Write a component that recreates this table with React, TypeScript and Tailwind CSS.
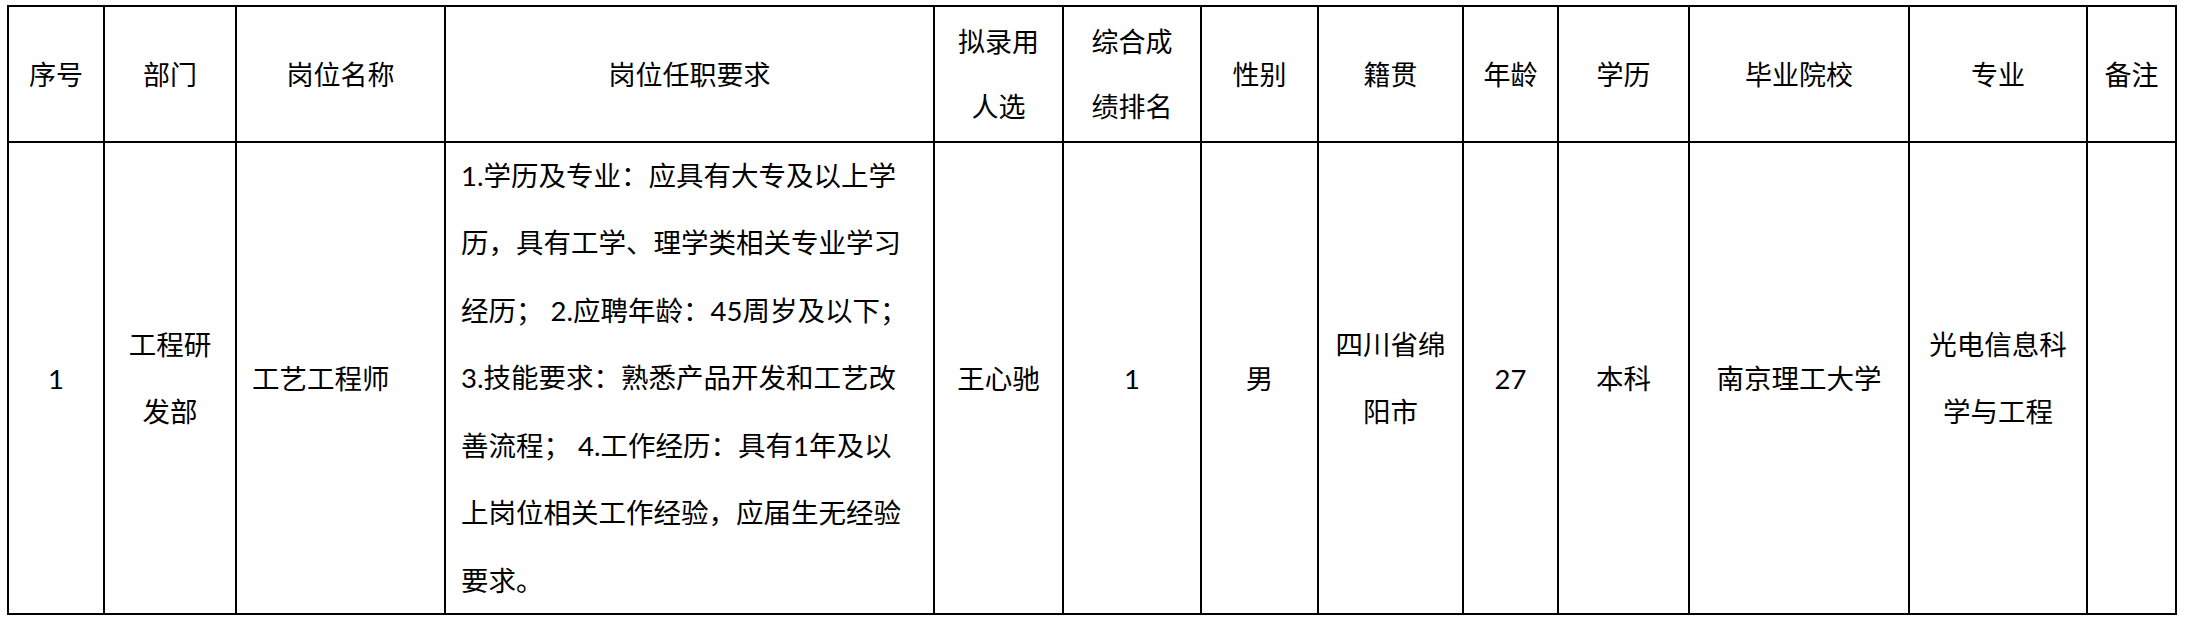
import React from "react";

const CJK = "font-['Lato','Noto_Sans_CJK_SC',sans-serif]";

const headers: string[][] = [
  ["序号"],
  ["部门"],
  ["岗位名称"],
  ["岗位任职要求"],
  ["拟录用", "人选"],
  ["综合成", "绩排名"],
  ["性别"],
  ["籍贯"],
  ["年龄"],
  ["学历"],
  ["毕业院校"],
  ["专业"],
  ["备注"],
];

const body: string[][] = [
  ["1"],
  ["工程研", "发部"],
  ["工艺工程师"],
  [],
  ["王心驰"],
  ["1"],
  ["男"],
  ["四川省绵", "阳市"],
  ["27"],
  ["本科"],
  ["南京理工大学"],
  ["光电信息科", "学与工程"],
  [],
];

const reqLines = [
  "1.学历及专业：应具有大专及以上学",
  "历，具有工学、理学类相关专业学习",
  "经历； 2.应聘年龄：45周岁及以下；",
  "3.技能要求：熟悉产品开发和工艺改",
  "善流程； 4.工作经历：具有1年及以",
  "上岗位相关工作经验，应届生无经验",
  "要求。",
];

export default function App() {
  return (
    <div className="w-[2187px] h-[626px] bg-white overflow-hidden">
      <div
        className={`ml-[7px] mt-[5px] grid w-max border-l-2 border-t-2 border-black text-black ${CJK} grid-cols-[96px_132px_209px_489px_129px_138px_117px_145px_95px_131px_220px_178px_89px] grid-rows-[136px_472px]`}
      >
        {headers.map((lines, i) => (
          <div
            key={"h" + i}
            className="flex flex-col items-center justify-center border-r-2 border-b-2 border-black text-[27px] leading-[65px] whitespace-nowrap"
          >
            {lines.map((l, j) => (
              <div key={j}>{l}</div>
            ))}
          </div>
        ))}
        {body.map((lines, i) =>
          i === 3 ? (
            <div
              key={"b" + i}
              className="flex flex-col justify-center border-r-2 border-b-2 border-black pl-[15px] text-[27.5px] leading-[67.4px] whitespace-pre"
            >
              {reqLines.map((l, j) => (
                <div key={j}>{l}</div>
              ))}
            </div>
          ) : i === 2 ? (
            <div
              key={"b" + i}
              className="flex flex-col items-start justify-center border-r-2 border-b-2 border-black pl-[15px] text-[27.5px] leading-[67px] whitespace-nowrap"
            >
              {lines.map((l, j) => (
                <div key={j}>{l}</div>
              ))}
            </div>
          ) : (
            <div
              key={"b" + i}
              className="flex flex-col items-center justify-center border-r-2 border-b-2 border-black text-[27.5px] leading-[67px] whitespace-nowrap"
            >
              {lines.map((l, j) => (
                <div key={j}>{l}</div>
              ))}
            </div>
          )
        )}
      </div>
    </div>
  );
}
